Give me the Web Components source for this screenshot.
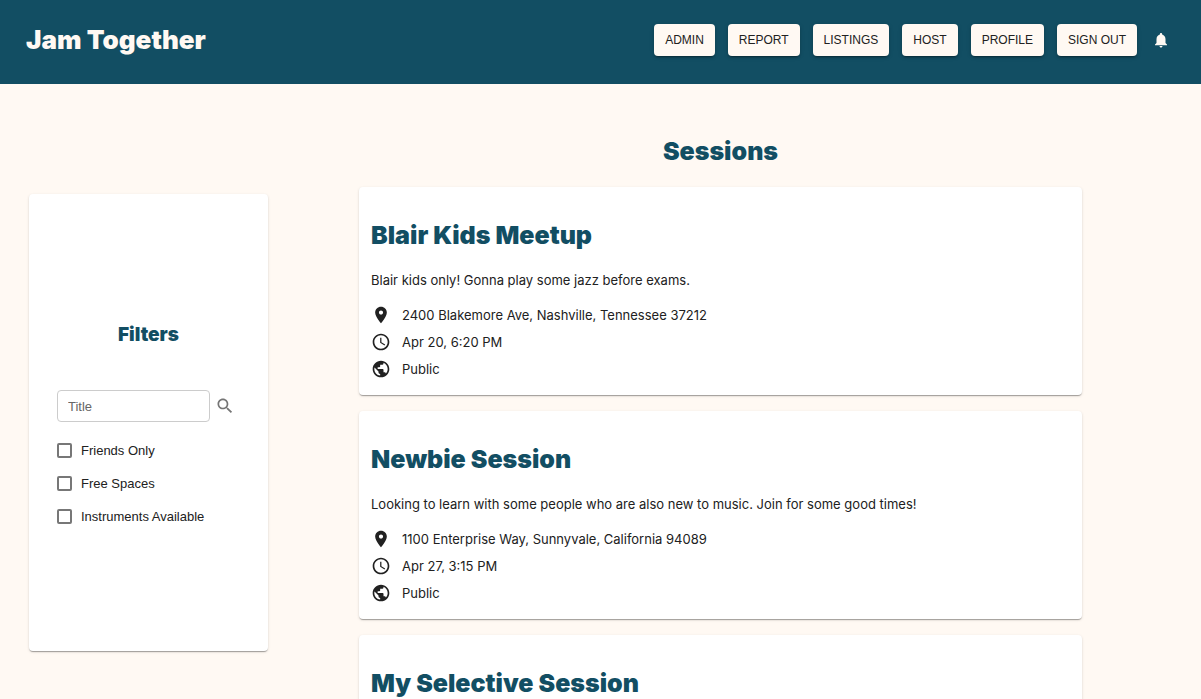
<!DOCTYPE html>
<html lang="en">
<head>
<meta charset="utf-8">
<title>Jam Together</title>
<style>
  :root {
    --teal: #124e63;
    --cream: #fff9f3;
    --ink: #212121;
    --display: Inter, "Noto Sans", sans-serif;
    --ui: "Liberation Sans", Arial, sans-serif;
    --card-shadow: 0 2px 1px -1px rgba(0,0,0,.2), 0 1px 1px 0 rgba(0,0,0,.14), 0 1px 3px 0 rgba(0,0,0,.12);
  }
  body { margin: 0; background: var(--cream); color: var(--ink); font-family: var(--ui); }
</style>
</head>
<body>
<jam-app></jam-app>
<script>
const define = (name, html, setup) => {
  const template = document.createElement('template');
  template.innerHTML = html;
  customElements.define(name, class extends HTMLElement {
    constructor() {
      super();
      this.attachShadow({ mode: 'open' }).append(template.content.cloneNode(true));
    }
    connectedCallback() { if (setup) setup(this, this.shadowRoot); }
  });
};

const icons = {
  bell: 'M12 22c1.1 0 2-.9 2-2h-4c0 1.100.89 2 2 2zm6-6v-5c0-3.070-1.640-5.640-4.500-6.320V4c0-.83-.67-1.500-1.500-1.500s-1.500.67-1.500 1.500v.68C7.630 5.360 6 7.920 6 11v5l-2 2v1h16v-1l-2-2z',
  search: 'M15.500 14h-.79l-.28-.27C15.410 12.590 16 11.110 16 9.500 16 5.910 13.090 3 9.500 3S3 5.910 3 9.500 5.910 16 9.500 16c1.610 0 3.090-.59 4.230-1.570l.27.28v.79l5 4.990L20.490 19l-4.990-5zm-6 0C7.010 14 5 11.990 5 9.500S7.010 5 9.500 5 14 7.010 14 9.500 11.990 14 9.500 14z',
  place: 'M12 2C8.130 2 5 5.130 5 9c0 5.250 7 13 7 13s7-7.750 7-13c0-3.870-3.130-7-7-7zm0 9.500c-1.380 0-2.500-1.120-2.500-2.500s1.120-2.500 2.500-2.500 2.500 1.120 2.500 2.500-1.120 2.500-2.500 2.500z',
  time: 'M11.990 2C6.470 2 2 6.480 2 12s4.470 10 9.990 10C17.520 22 22 17.520 22 12S17.520 2 11.990 2zM12 20c-4.420 0-8-3.580-8-8s3.580-8 8-8 8 3.580 8 8-3.580 8-8 8zm.5-13H11v6l5.250 3.150.75-1.230-4.500-2.670z',
  world: 'M12 2C6.480 2 2 6.480 2 12s4.480 10 10 10 10-4.480 10-10S17.520 2 12 2zm-1 17.930c-3.950-.49-7-3.850-7-7.930 0-.62.080-1.210.210-1.790L9 15v1c0 1.100.9 2 2 2v1.930zm6.900-2.540c-.26-.81-1-1.390-1.900-1.390h-1v-3c0-.55-.45-1-1-1H8v-2h2c.55 0 1-.45 1-1V7h2c1.100 0 2-.9 2-2v-.41c2.930 1.190 5 4.060 5 7.410 0 2.080-.8 3.970-2.100 5.390z'
};
define('jam-icon', `
  <style>
    :host { display: block; width: 20px; height: 20px; flex: none; }
    svg { display: block; width: 100%; height: 100%; fill: currentColor; }
  </style>
  <svg viewBox="0 0 24 24" aria-hidden="true"><path></path></svg>`,
  (el, root) => root.querySelector('path').setAttribute('d', icons[el.getAttribute('name')]));

define('nav-button', `
  <style>
    :host { display: block; }
    button {
      display: block; height: 32px; padding: 0 11px; border: 0; border-radius: 4px;
      background: var(--cream); color: var(--ink); font: 12px/32px var(--ui); cursor: pointer;
      box-shadow: 0 3px 1px -2px rgba(0,0,0,.2), 0 2px 2px 0 rgba(0,0,0,.14), 0 1px 5px 0 rgba(0,0,0,.12);
    }
  </style>
  <button type="button"><slot></slot></button>`);

define('jam-header', `
  <style>
    :host { display: block; background: var(--teal); color: var(--cream); }
    header { display: flex; align-items: flex-start; justify-content: space-between; box-sizing: border-box; min-height: 84px; padding: 24px 29px 0 26px; }
    h1 { margin: 0; font: 900 26px/32px var(--display); }
    nav { display: flex; align-items: center; gap: 13px; }
    .bell { display: block; padding: 2px; border: 0; background: none; color: inherit; cursor: pointer; }
    .bell jam-icon { width: 18px; height: 18px; }
  </style>
  <header>
    <h1>Jam Together</h1>
    <nav>
      <nav-button>ADMIN</nav-button>
      <nav-button>REPORT</nav-button>
      <nav-button>LISTINGS</nav-button>
      <nav-button>HOST</nav-button>
      <nav-button>PROFILE</nav-button>
      <nav-button>SIGN OUT</nav-button>
      <button class="bell" type="button" aria-label="Notifications"><jam-icon name="bell"></jam-icon></button>
    </nav>
  </header>`);

define('filter-check', `
  <style>
    :host { display: block; }
    label { display: flex; align-items: center; gap: 9px; height: 33px; font: 13px/16px var(--ui); }
    input { appearance: none; box-sizing: border-box; width: 15px; height: 15px; margin: 0; border: 2px solid #777; border-radius: 2px; }
    input:checked { background: var(--teal); border-color: var(--teal); }
  </style>
  <label><input type="checkbox"><slot></slot></label>`);

define('filter-panel', `
  <style>
    :host { display: flex; flex-direction: column; justify-content: center; box-sizing: border-box;
      min-height: 457px; padding: 8px 28px 0 28px; background: #fff; border-radius: 4px; box-shadow: var(--card-shadow); }
    h2 { margin: 0 0 40px; color: var(--teal); font: 900 19px/30px var(--display); text-align: center; }
    form { display: block; }
    .search { display: flex; align-items: center; gap: 5px; margin: 0 0 12px; padding-right: 5px; }
    input { box-sizing: border-box; flex: 1; min-width: 0; height: 32px; padding: 0 10px; border: 1px solid #ccc; border-radius: 4px; background: none; color: var(--ink); font: 13px/16px var(--ui); }
    input::placeholder { color: #666; opacity: 1; }
    .search button { display: block; padding: 0; border: 0; background: none; color: #757575; cursor: pointer; }
  </style>
  <h2>Filters</h2>
  <form>
    <div class="search">
      <input type="text" placeholder="Title" aria-label="Title">
      <button type="button" aria-label="Search"><jam-icon name="search"></jam-icon></button>
    </div>
    <filter-check>Friends Only</filter-check>
    <filter-check>Free Spaces</filter-check>
    <filter-check>Instruments Available</filter-check>
  </form>`);

define('session-detail', `
  <style>
    :host { display: flex; align-items: center; gap: 11px; height: 27px; font: 13px/20px var(--display); }
  </style>
  <jam-icon></jam-icon><span><slot></slot></span>`,
  (el, root) => {
    root.querySelector('jam-icon').remove();
    const icon = document.createElement('jam-icon');
    icon.setAttribute('name', el.getAttribute('icon'));
    root.querySelector('span').before(icon);
  });

define('session-card', `
  <style>
    :host { display: block; box-sizing: border-box; min-height: 208px; padding: 28px 12px 13px; background: #fff; border-radius: 4px; box-shadow: var(--card-shadow); }
    h2 { margin: 0 0 15px; color: var(--teal); font: 900 25px/40px var(--display); }
    p { margin: 0 0 11px; font: 13px/20px var(--display); }
  </style>
  <h2><slot name="title"></slot></h2>
  <p><slot name="about"></slot></p>
  <slot></slot>`);

define('jam-app', `
  <style>
    :host { display: block; height: 100vh; overflow: hidden; }
    main { display: grid; grid-template-columns: minmax(0, 239fr) minmax(0, 723fr); column-gap: 91px; align-items: start; padding: 47px 119px 16px 29px; }
    filter-panel { margin-top: 63px; }
    section { display: flex; flex-direction: column; gap: 16px; }
    h2 { margin: 0; color: var(--teal); font: 900 25px/40px var(--display); text-align: center; }
  </style>
  <jam-header></jam-header>
  <main>
    <filter-panel></filter-panel>
    <section>
      <h2>Sessions</h2>
      <session-card>
        <span slot="title">Blair Kids Meetup</span>
        <span slot="about">Blair kids only! Gonna play some jazz before exams.</span>
        <session-detail icon="place">2400 Blakemore Ave, Nashville, Tennessee 37212</session-detail>
        <session-detail icon="time">Apr 20, 6:20 PM</session-detail>
        <session-detail icon="world">Public</session-detail>
      </session-card>
      <session-card>
        <span slot="title">Newbie Session</span>
        <span slot="about">Looking to learn with some people who are also new to music. Join for some good times!</span>
        <session-detail icon="place">1100 Enterprise Way, Sunnyvale, California 94089</session-detail>
        <session-detail icon="time">Apr 27, 3:15 PM</session-detail>
        <session-detail icon="world">Public</session-detail>
      </session-card>
      <session-card>
        <span slot="title">My Selective Session</span>
      </session-card>
    </section>
  </main>`);
</script>
</body>
</html>
